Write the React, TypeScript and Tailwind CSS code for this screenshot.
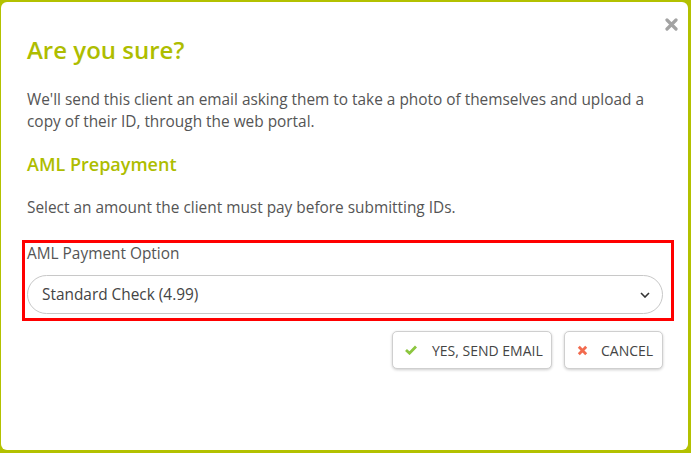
import React from "react";

export default function App() {
  return (
    <div
      className="w-[691px] h-[453px] bg-[#b3c100] pt-[2px] pl-[1px] pr-[3px] pb-[3px]"
      style={{ fontFamily: '"Open Sans", "Noto Sans", sans-serif' }}
    >
      <div className="relative h-full w-full rounded-[6px] bg-white text-[#555]">
        <button className="absolute left-[664px] top-[16px] leading-none">
          <svg width="13" height="13" viewBox="0 0 13 13">
            <path d="M2 2 L11 11 M11 2 L2 11" stroke="#a3a3a3" strokeWidth="3.2" strokeLinecap="round" />
          </svg>
        </button>
        <div className="pl-[26px] pr-[25px] pt-[32px]">
          <h1 className="text-[24px] font-semibold leading-[32px] text-[#aebd00]">Are you sure?</h1>
          <p className="mt-[23px] text-[15.4px] leading-[22px]">
            We'll send this client an email asking them to take a photo of themselves and upload a copy of their ID, through the web portal.
          </p>
          <h2 className="mt-[18px] text-[18px] font-semibold leading-[26px] text-[#aebd00]">AML Prepayment</h2>
          <p className="mt-[20px] text-[15.4px] leading-[22px]">Select an amount the client must pay before submitting IDs.</p>
          <div className="-ml-[5px] -mr-[11px] mt-[21px] border-[3px] border-[#ff0000] pl-[2px] pr-[8px] pb-[4px]">
            <div className="text-[15.4px] leading-[22px]">AML Payment Option</div>
            <div className="mt-[10px] flex h-[39px] items-center justify-between rounded-full border border-[#c8c8c8] pl-[14px] pr-[12px] text-[15.4px] text-[#444]">
              <span>Standard Check (4.99)</span>
              <svg width="10" height="6" viewBox="0 0 10 6" fill="none">
                <path d="M1 1 L5 5 L9 1" stroke="#333" strokeWidth="1.6" />
              </svg>
            </div>
          </div>
          <div className="mt-[10px] flex justify-end gap-[12px]">
            <button className="flex h-[38px] w-[160px] items-center rounded-[5px] border border-[#cfcfcf] bg-white pl-[12px] text-[14px] text-[#444] shadow-[0_1px_3px_rgba(0,0,0,0.2)]">
              <svg width="12" height="10" viewBox="0 0 12 10" className="mr-[15px]">
                <path d="M1 5 L4.5 8.2 L11 1.5" stroke="#8cc63f" strokeWidth="2.8" fill="none" />
              </svg>
              YES, SEND EMAIL
            </button>
            <button className="flex h-[38px] w-[99px] items-center rounded-[5px] border border-[#cfcfcf] bg-white pl-[12px] text-[14px] text-[#444] shadow-[0_1px_3px_rgba(0,0,0,0.2)]">
              <svg width="11" height="11" viewBox="0 0 11 11" className="mr-[13px]">
                <path d="M1.8 1.8 L9.2 9.2 M9.2 1.8 L1.8 9.2" stroke="#f26b4f" strokeWidth="2.8" />
              </svg>
              CANCEL
            </button>
          </div>
        </div>
      </div>
    </div>
  );
}
